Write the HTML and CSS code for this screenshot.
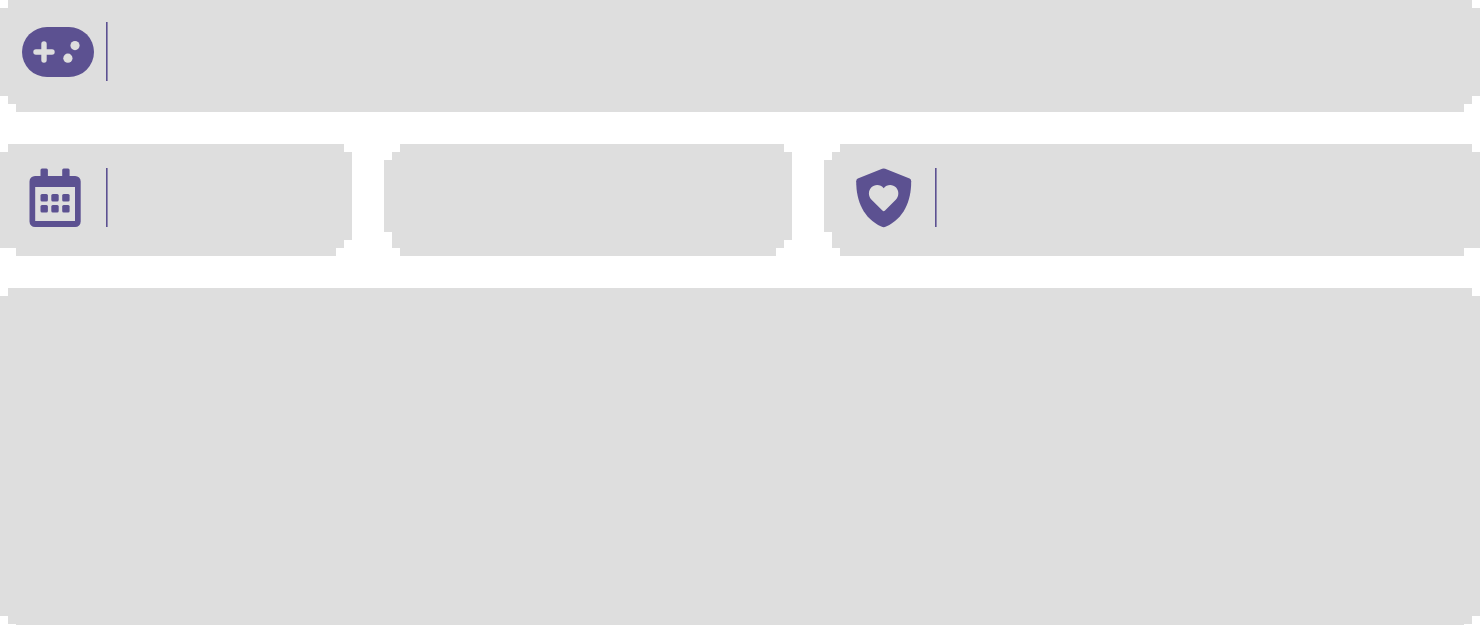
FILE: index.html
```html
<!DOCTYPE html>
<html lang="en">
<head>
<meta charset="utf-8">
<meta name="viewport" content="width=device-width, initial-scale=1">
<title>Dashboard</title>
<link rel="stylesheet" href="styles.css">
</head>
<body>
<main class="board">
  <section class="card card-games">
    <svg class="icon" width="72" height="60" viewBox="0 0 72 60" role="img" aria-label="Games">
      <rect class="ink" x="0" y="5" width="72" height="50" rx="25"/>
      <path class="cross" d="M14 30h16M22 22v16"/>
      <circle class="hole" cx="53" cy="23.6" r="4.6"/>
      <circle class="hole" cx="45.9" cy="36.2" r="4.6"/>
    </svg>
    <span class="divider"></span>
  </section>
  <div class="row">
    <section class="card card-calendar">
      <svg class="icon" width="53" height="60" viewBox="0 0 53 60" role="img" aria-label="Calendar">
        <path class="ink" fill-rule="evenodd" d="M13 .5h4.400a1.500 1.500 0 0 1 1.500 1.500V8H33.200V2a1.500 1.500 0 0 1 1.500-1.500h4.400a1.500 1.500 0 0 1 1.500 1.500V8H46.200a5.500 5.500 0 0 1 5.500 5.500V53.500a5.500 5.500 0 0 1-5.500 5.500H6A5.500 5.500 0 0 1 .5 53.500V13.500A5.500 5.500 0 0 1 6 8h5.500V2a1.500 1.500 0 0 1 1.500-1.500zM6.200 19v34H46V19z"/>
        <g class="ink">
          <rect x="11.500" y="26" width="7.400" height="7.600" rx="1.500"/>
          <rect x="22.300" y="26" width="7.400" height="7.600" rx="1.500"/>
          <rect x="33.200" y="26" width="7.400" height="7.600" rx="1.500"/>
          <rect x="11.500" y="37" width="7.400" height="7.600" rx="1.500"/>
          <rect x="22.300" y="37" width="7.400" height="7.600" rx="1.500"/>
          <rect x="33.200" y="37" width="7.400" height="7.600" rx="1.500"/>
        </g>
      </svg>
      <span class="divider"></span>
    </section>
    <section class="card card-plain"></section>
    <section class="card card-health">
      <svg class="icon" width="56" height="60" viewBox="0 0 56 60" role="img" aria-label="Health protection">
        <path class="ink" d="M26.200 .7Q27.700 .1 29.200 .7L53.600 10.500Q55.200 11.200 55.200 13.200C55.200 33.500 47.900 50 30.100 58.600Q27.700 59.700 25.300 58.600C7.500 50 .2 33.500 .2 13.200Q.2 11.200 1.800 10.500z"/>
        <path class="hole" d="M27.700 20.300C24.600 16.200 18.500 16.100 15.200 19.600 11.900 23.200 12.400 28.500 15.300 31.500L26.400 42.600Q27.700 43.700 29 42.600L40 31.500C42.900 28.500 43.300 23.200 40.100 19.600 36.800 16.100 30.800 16.200 27.700 20.300z"/>
      </svg>
      <span class="divider"></span>
    </section>
  </div>
  <section class="card card-main"></section>
</main>
</body>
</html>
```
FILE: styles.css
```css
:root {
  --surface: #dedede;
  --accent: #5c5191;
  --step: 8px;
  --step2: 16px;
}

body {
  margin: 0;
  background: #fff;
  font-family: "Liberation Sans", Arial, sans-serif;
}

.board {
  display: flex;
  flex-direction: column;
  gap: 32px;
  min-height: 100vh;
}

.row {
  display: grid;
  grid-template-columns: 352fr 408fr 656fr;
  gap: 32px;
}

/* Cards have corners cut in square 8px steps. */
.card {
  box-sizing: border-box;
  display: flex;
  align-items: flex-start;
  min-height: 112px;
  background: var(--surface);
}

.icon {
  display: block;
  flex: none;
}

.ink { fill: var(--accent); }
.hole { fill: var(--surface); }

.cross {
  fill: none;
  stroke: var(--surface);
  stroke-width: 5.4;
  stroke-linecap: round;
}

.divider {
  width: 1px;
  height: 59px;
  background: var(--accent);
  border-right: 1px solid #8f88b0;
}

.card-games,
.card-main {
  clip-path: polygon(
    0 var(--step), var(--step) var(--step), var(--step) 0,
    calc(100% - var(--step)) 0, calc(100% - var(--step)) var(--step), 100% var(--step),
    100% calc(100% - var(--bottom)), calc(100% - var(--step)) calc(100% - var(--bottom)),
    calc(100% - var(--step)) calc(100% - var(--lip)), calc(100% - var(--step2)) calc(100% - var(--lip)),
    calc(100% - var(--step2)) 100%, var(--step2) 100%,
    var(--step2) calc(100% - var(--lip)), var(--step) calc(100% - var(--lip)),
    var(--step) calc(100% - var(--bottom)), 0 calc(100% - var(--bottom)));
}

.card-games {
  --bottom: 16px;
  --lip: 8px;
  gap: 12px;
  padding: 22px;
}

.card-main {
  --bottom: 9px;
  --lip: 1px;
  flex: 1;
}

.card-calendar {
  gap: 24px;
  padding: 24px 29px;
  clip-path: polygon(
    0 var(--step), var(--step) var(--step), var(--step) 0,
    calc(100% - var(--step)) 0, calc(100% - var(--step)) var(--step), 100% var(--step),
    100% calc(100% - var(--step2)), calc(100% - var(--step)) calc(100% - var(--step2)),
    calc(100% - var(--step)) calc(100% - var(--step)), calc(100% - var(--step2)) calc(100% - var(--step)),
    calc(100% - var(--step2)) 100%, var(--step2) 100%,
    var(--step2) calc(100% - var(--step)), 0 calc(100% - var(--step)));
}

.card-plain,
.card-health {
  clip-path: polygon(
    0 var(--step2), var(--step) var(--step2), var(--step) var(--step), var(--step2) var(--step), var(--step2) 0,
    calc(100% - var(--step)) 0, calc(100% - var(--step)) var(--step), 100% var(--step),
    100% calc(100% - var(--right)), calc(100% - var(--step)) calc(100% - var(--right)),
    calc(100% - var(--step)) calc(100% - var(--step)), calc(100% - var(--step2)) calc(100% - var(--step)),
    calc(100% - var(--step2)) 100%, var(--step2) 100%,
    var(--step2) calc(100% - var(--step)), var(--step) calc(100% - var(--step)),
    var(--step) calc(100% - 24px), 0 calc(100% - 24px));
}

.card-plain { --right: 16px; }

.card-health {
  --right: 8px;
  gap: 23px;
  padding: 24px 32px;
}
```
